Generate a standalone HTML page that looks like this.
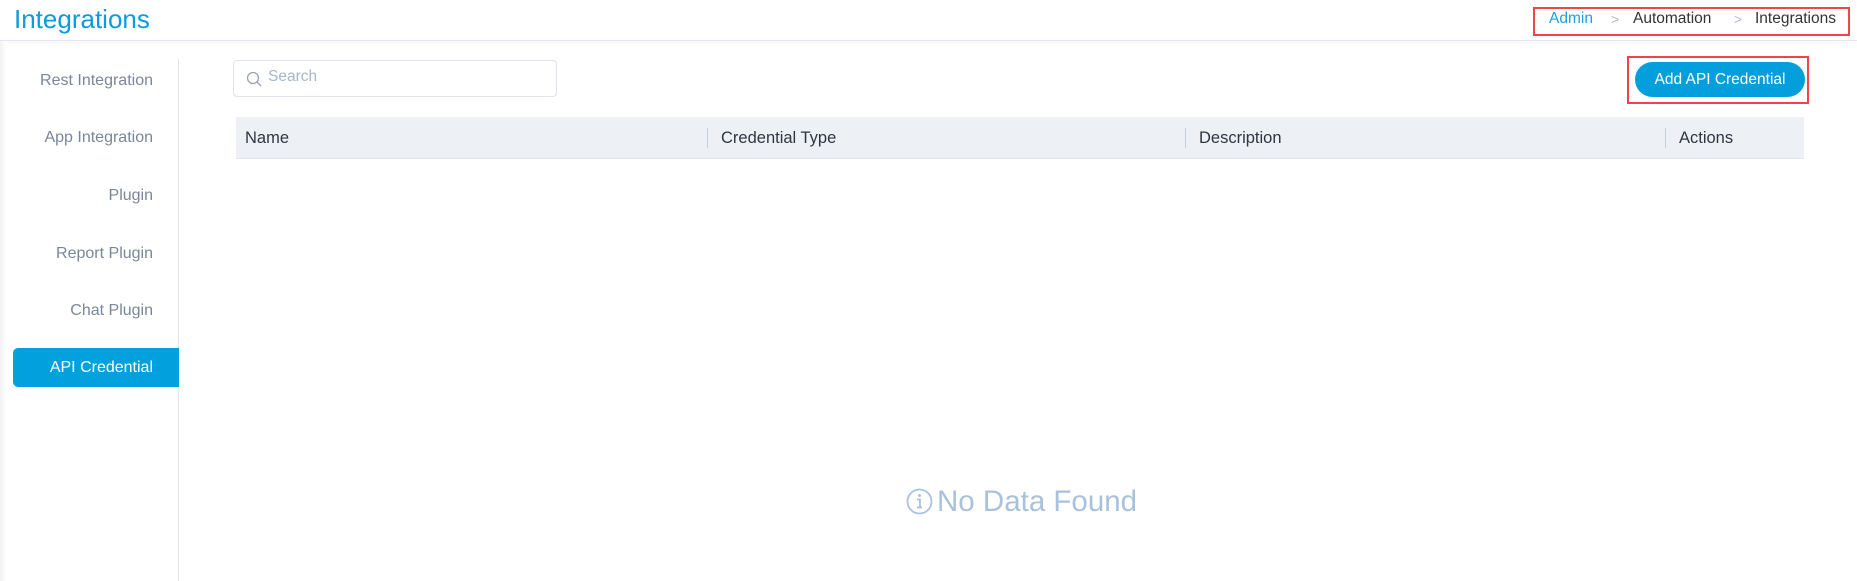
<!DOCTYPE html>
<html><head><meta charset="utf-8"><style>
body{margin:0;width:1857px;height:581px;background:#fff;font-family:"Liberation Sans",sans-serif;position:relative;overflow:hidden}
.a{position:absolute;white-space:nowrap}
.hdr{position:absolute;left:0;top:0;width:1857px;height:40px;border-bottom:1px solid #e3e6ee;box-shadow:0 2px 4px rgba(0,0,0,0.03)}
.side{position:absolute;left:0;top:41px;width:6px;height:540px;background:linear-gradient(90deg,#f0f1f3,#fff)}
.menu{position:absolute;right:1704px;font-size:16px;color:#7a8699}
.th{position:absolute;font-size:16.5px;color:#2f3642;top:129px}
.sep{position:absolute;top:128px;width:1px;height:20px;background:#c8ced8}
</style></head><body>
<div class="hdr"></div>
<div class="a" style="left:14px;top:4px;font-size:26px;color:#0a9be0">Integrations</div>
<div class="a" style="left:1533px;top:7px;width:313px;height:25px;border:2px solid #f0434a"></div>
<div class="a" style="left:1549px;top:10px;font-size:15.5px;color:#1a9fe0">Admin</div>
<div class="a" style="left:1611px;top:11px;font-size:14px;color:#b0b8c4">&gt;</div>
<div class="a" style="left:1633px;top:10px;font-size:15.5px;color:#333">Automation</div>
<div class="a" style="left:1734px;top:11px;font-size:14px;color:#b0b8c4">&gt;</div>
<div class="a" style="left:1755px;top:10px;font-size:15.5px;color:#333">Integrations</div>
<div class="side"></div>
<div class="a" style="left:178px;top:59px;width:1px;height:522px;background:#e3e6ee"></div>
<div class="menu a" style="top:72px">Rest Integration</div>
<div class="menu a" style="top:129px">App Integration</div>
<div class="menu a" style="top:187px">Plugin</div>
<div class="menu a" style="top:245px">Report Plugin</div>
<div class="menu a" style="top:302px">Chat Plugin</div>
<div class="a" style="left:13px;top:348px;width:166px;height:39px;background:#03a0de;border-radius:5px 0 0 5px"></div>
<div class="menu a" style="top:359px;color:#fff">API Credential</div>
<div class="a" style="left:233px;top:60px;width:322px;height:35px;border:1px solid #dfe3ea;border-radius:4px"></div>
<svg class="a" style="left:245px;top:70px" width="18" height="18" viewBox="0 0 18 18"><circle cx="8" cy="8" r="5.5" fill="none" stroke="#9aa3b0" stroke-width="1.3"/><path d="M12 12L16 16" stroke="#9aa3b0" stroke-width="1.3"/></svg>
<div class="a" style="left:268px;top:68px;font-size:15.5px;color:#a8b6c8">Search</div>
<div class="a" style="left:1627px;top:56px;width:178px;height:44px;border:2px solid #f0434a"></div>
<div class="a" style="left:1635px;top:62px;width:170px;height:35px;border-radius:18px;background:#039fdd;color:#fff;font-size:15.5px;text-align:center;line-height:35px">Add API Credential</div>
<div class="a" style="left:236px;top:117px;width:1568px;height:41px;background:#edf0f4;border-bottom:1px solid #e0e4ea"></div>
<div class="th" style="left:245px">Name</div>
<div class="sep" style="left:707px"></div>
<div class="th" style="left:721px">Credential Type</div>
<div class="sep" style="left:1185px"></div>
<div class="th" style="left:1199px">Description</div>
<div class="sep" style="left:1665px"></div>
<div class="th" style="left:1679px">Actions</div>
<svg class="a" style="left:906px;top:488px" width="27" height="27" viewBox="0 0 27 27"><circle cx="13.5" cy="13.5" r="12" fill="none" stroke="#a9c2dc" stroke-width="1.8"/><circle cx="13.5" cy="7.5" r="1.5" fill="#a9c2dc"/><path d="M11 11.5h3v8M11 19.5h5" fill="none" stroke="#a9c2dc" stroke-width="1.8"/></svg>
<div class="a" style="left:937px;top:485px;font-size:29.5px;color:#a9c2dc">No Data Found</div>
</body></html>
